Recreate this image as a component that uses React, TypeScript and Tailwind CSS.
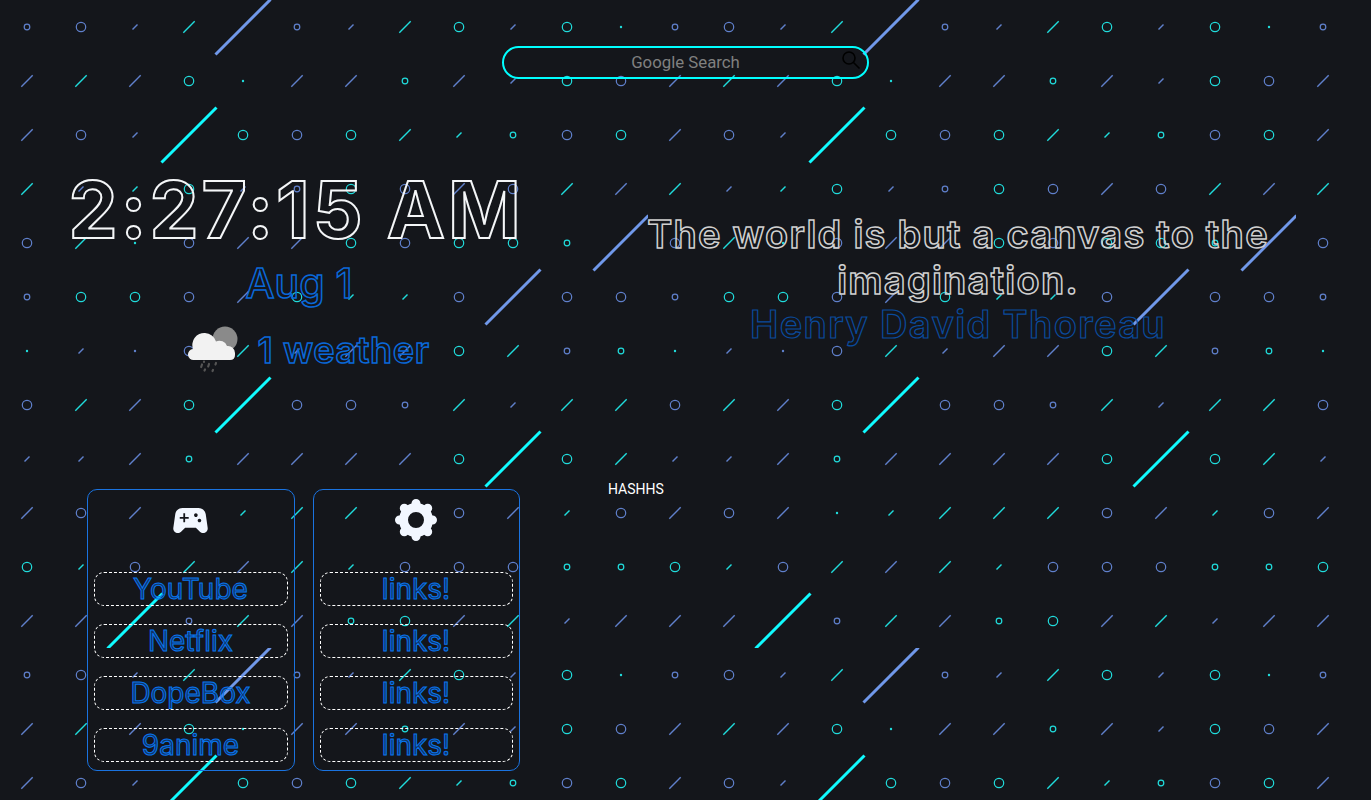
import { MdSportsEsports } from "react-icons/md";

// one 648px tile of the background, 12x12 cells of 54px
// shape: o small ring, O big ring, . dot, s short line, / line, L long line
// colour: b blue, c cyan
const TILE = [
  "ob Ob sb /c Lb ob sb /c Oc sb Oc .c",
  "/b /c /b Oc .c /b /b oc /b sb Oc Ob",
  "/b Ob sb Lc Oc Ob Oc /c sc oc Ob Oc",
  "/c sb sc Oc sb ob Oc Ob /b Ob /c /b",
  "Ob /c .c Ob /b /b Oc Ob Oc Oc oc Lb",
  "ob Oc Oc Ob /b Oc sc sc Ob Lb Ob Ob",
  ".c sb .b Ob /c sb /b /b Oc /c ob oc",
  "Ob /c /b Oc Lc Ob Ob ob /c sb /c /c",
  "sb sb /b oc /b /b /b /b Oc Lc Oc /c",
  "/b Ob /b .c sc /c /c /c Ob /b sc Ob",
  "Oc sc Ob /c /b /c sc Ob Ob Ob oc oc",
  "/b /b Lc ob /c /b oc Oc /b /c sb /b",
];

const Cell = ({ code, col, row }: { code: string; col: number; row: number }) => {
  const cx = col * 54 + 27;
  const cy = row * 54 + 27;
  const dim = code[1] === "c" ? "#1fdcdc" : "#5f80cc";
  const bright = code[1] === "c" ? "#10fbff" : "#7098ea";
  switch (code[0]) {
    case "o":
      return <circle cx={cx} cy={cy} r={2.8} fill="none" stroke={dim} strokeWidth={1.2} />;
    case "O":
      return <circle cx={cx} cy={cy} r={4.7} fill="none" stroke={dim} strokeWidth={1.2} />;
    case ".":
      return <circle cx={cx} cy={cy} r={1.2} fill={dim} />;
    case "s":
      return <line x1={cx - 2.5} y1={cy + 2.5} x2={cx + 2.5} y2={cy - 2.5} stroke={dim} strokeWidth={1.4} />;
    case "/":
      return <line x1={cx - 5.7} y1={cy + 5.7} x2={cx + 5.7} y2={cy - 5.7} stroke={dim} strokeWidth={1.4} />;
    default:
      return <line x1={cx - 27.5} y1={cy + 27.5} x2={cx + 27.5} y2={cy - 27.5} stroke={bright} strokeWidth={3} />;
  }
};

const Backdrop = () => (
  <svg className="absolute inset-0 w-full h-full" aria-hidden="true">
    <defs>
      <pattern id="tile" width="648" height="648" patternUnits="userSpaceOnUse">
        {TILE.map((line, row) =>
          line.split(" ").map((code, col) => <Cell key={`${row}-${col}`} code={code} col={col} row={row} />)
        )}
      </pattern>
    </defs>
    <rect width="100%" height="100%" fill="url(#tile)" />
  </svg>
);

const WeatherIcon = () => (
  <svg width="52" height="48" viewBox="0 0 52 48" aria-hidden="true">
    <circle cx="37" cy="13" r="12.500" fill="#8a8a8a" />
    <path
      d="M6 34a5.500 5.500 0 0 1-1-11A12 12 0 0 1 17 7a12 12 0 0 1 11 8.500a8 8 0 0 1 11 4.500a7 7 0 0 1 8 7v2q0 5-5 5Z"
      fill="#f2f2f2"
    />
    <g stroke="#555" strokeWidth="2.200" strokeLinecap="round">
      <path d="M16 35.500v.5M28 37l-.5 1.500M21 38l-.8 2.500M14 38.500l-.8 2.500M25 44l-.5 1M17 43.500l-.5 1" />
    </g>
  </svg>
);

const GearIcon = () => (
  <svg width="44" height="44" viewBox="0 0 44 44" fill="none" stroke="currentColor" aria-hidden="true">
    <circle cx="22" cy="22" r="12.500" strokeWidth="9" />
    <path
      d="M22 5.500v3M22 35.500v3M5.500 22h3M35.500 22h3M10.300 10.300l2.100 2.100M31.600 31.600l2.100 2.100M10.300 33.700l2.100-2.100M31.600 12.400l2.100-2.100"
      strokeWidth="9"
      strokeLinecap="round"
    />
  </svg>
);

const LinkBox = ({ label }: { label: string }) => (
  <a className="flex items-center justify-center h-[34px] border border-dashed border-white rounded-[10px] font-['Inter',sans-serif] text-[28px] leading-none text-[#0a6ce4]/40 [-webkit-text-stroke:1px_#0875ee]">
    {label}
  </a>
);

const Panel = ({ icon, links, width }: { icon: React.ReactNode; links: string[]; width: string }) => (
  <div className={`${width} h-[282px] border border-[#1a73e0] rounded-[10px] px-[6px]`}>
    <div className="flex items-center justify-center h-[60px] text-[#f2f7ff]">{icon}</div>
    <div className="flex flex-col gap-[18px] mt-[22px]">
      {links.map((label, i) => (
        <LinkBox key={i} label={label} />
      ))}
    </div>
  </div>
);

export default function App() {
  return (
    <div className="relative h-screen overflow-hidden bg-[#14161b] font-['Roboto',sans-serif]">
      <Backdrop />

      <div className="relative flex flex-col">
        <div className="flex justify-center pt-[46px]">
          <div className="relative w-[367px] h-[33px] border-2 border-[#0ff] rounded-full">
            <input
              className="w-full h-full pb-[2px] bg-transparent text-center text-[16.8px] outline-none placeholder:text-[#808080]"
              placeholder="Google Search"
            />
            <svg
              className="absolute right-[6px] top-[2px] w-[20px] h-[20px]"
              viewBox="0 0 20 20"
              fill="none"
              stroke="#000"
              strokeWidth="1.6"
            >
              <circle cx="8" cy="8" r="6" />
              <path d="M12.500 12.500l6 6" />
            </svg>
          </div>
        </div>

        <div className="flex">
          <div className="w-[592px] flex flex-col items-center pt-[91px]">
            <div className="font-['Inter',sans-serif] font-bold text-[78px] leading-[80px] tracking-[2.9px] whitespace-nowrap text-transparent [-webkit-text-stroke:2px_#f4f6f8]">
              2:27:15 AM
            </div>
            <div className="ml-[6px] mt-[11px] font-['Inter',sans-serif] font-medium text-[41px] leading-[44px] text-transparent [-webkit-text-stroke:1.5px_#0a68d8]">
              Aug 1
            </div>
            <div className="ml-[26px] mt-[22px] flex items-center gap-[17px] h-[46px]">
              <WeatherIcon />
              <span className="font-['Inter',sans-serif] font-semibold text-[36px] leading-[46px] tracking-[0.6px] text-transparent [-webkit-text-stroke:1.5px_#0a68d8]">
                1 weather
              </span>
            </div>
            <div className="ml-[14px] mt-[116px] flex gap-[18px]">
              <Panel
                width="w-[208px]"
                icon={<MdSportsEsports size={43} />}
                links={["YouTube", "Netflix", "DopeBox", "9anime"]}
              />
              <Panel
                width="w-[207px]"
                icon={<GearIcon />}
                links={["links!", "links!", "links!", "links!"]}
              />
            </div>
          </div>

          <div className="w-[732px] pt-[132px]">
            <div className="font-['Inter',sans-serif] font-semibold text-[38px] leading-[46px] text-center text-transparent [-webkit-text-stroke:1.5px_#d0d0d0]">
              <div className="tracking-[1.25px]">The world is but a canvas to the</div>
              <div className="tracking-[1.25px]">imagination.</div>
              <div className="-mt-[2px] tracking-[1.4px] [-webkit-text-stroke:1.2px_#0a4a9c]">Henry David Thoreau</div>
            </div>
            <div className="mt-[132px] pl-4 text-sm leading-5 text-white">HASHHS</div>
          </div>
        </div>
      </div>
    </div>
  );
}
